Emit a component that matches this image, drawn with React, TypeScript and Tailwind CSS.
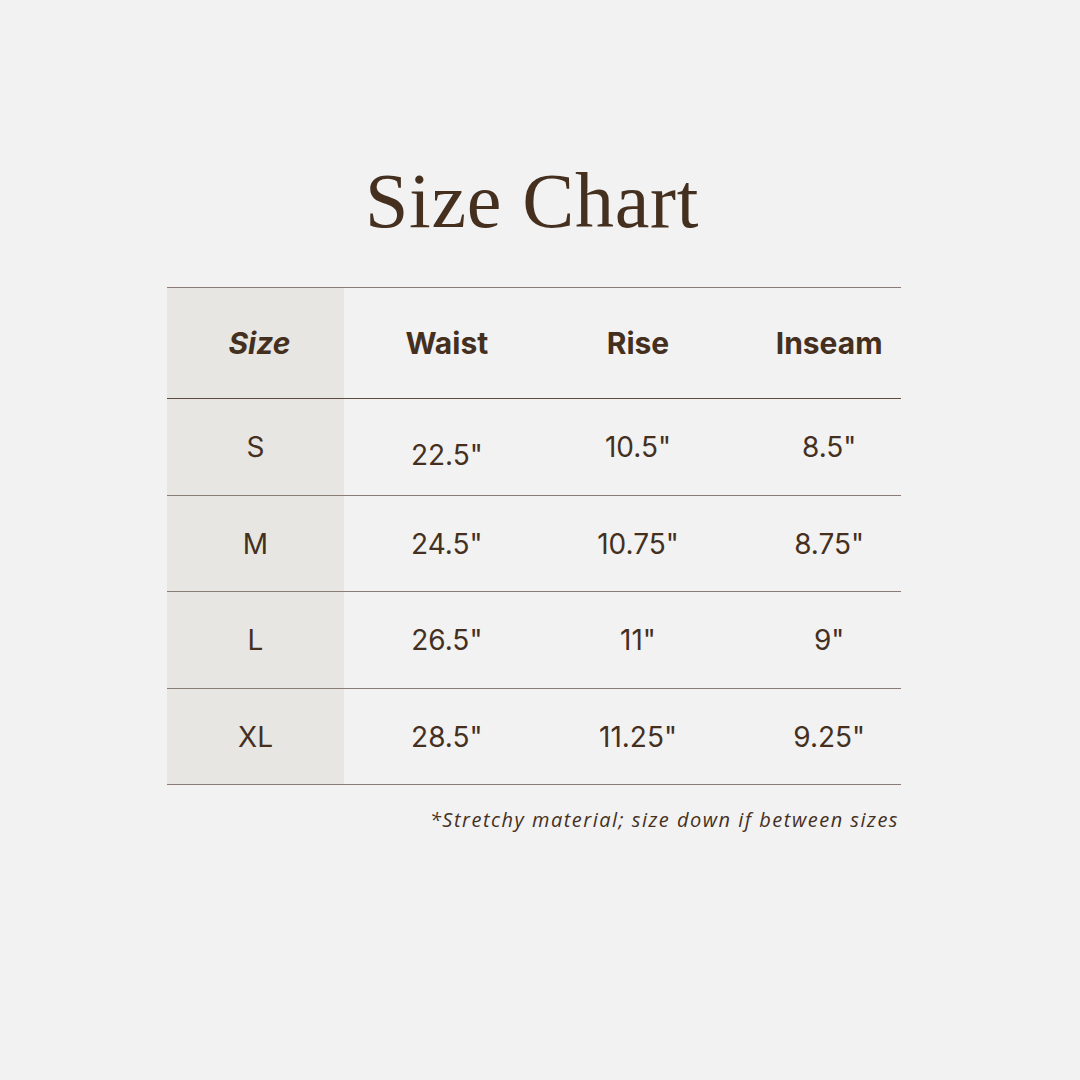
const rows = [
  { size: "S", waist: '22.5"', rise: '10.5"', inseam: '8.5"', waistDrop: true, h: "h-[97px]" },
  { size: "M", waist: '24.5"', rise: '10.75"', inseam: '8.75"', h: "h-[96px]" },
  { size: "L", waist: '26.5"', rise: '11"', inseam: '9"', h: "h-[97px]" },
  { size: "XL", waist: '28.5"', rise: '11.25"', inseam: '9.25"', h: "h-[96px]" },
];

const sans = "font-['Inter',sans-serif]";

export default function App() {
  return (
    <div className="w-[1080px] h-[1080px] bg-[#f2f2f2] text-[#45301f]">
      <h1 className="pt-[162px] pl-[365px] font-['Liberation_Serif',serif] text-[78px] leading-none font-normal tracking-[0.7px]">
        Size Chart
      </h1>

      <div className="mt-[47px] ml-[167px] w-[734px]">
        <div className="border-t border-[#8a7d75]">
          {/* header */}
          <div className={`grid grid-cols-[177px_1fr_1fr_1fr] h-[110px] items-center text-[30px] font-bold ${sans}`}>
            <div className="h-full bg-[#e8e6e2] flex items-center justify-center italic pl-[8px]">Size</div>
            <div className="text-center pl-[20px]">Waist</div>
            <div className="text-center pl-[31px]">Rise</div>
            <div className="text-center pl-[42px]">Inseam</div>
          </div>
          <div className="border-t border-[#5c4a3e]" />

          {rows.map((r) => (
            <div
              key={r.size}
              className={`grid grid-cols-[177px_1fr_1fr_1fr] ${r.h} items-center text-[28px] border-b border-[#8a7d75] ${sans}`}
            >
              <div className="h-full bg-[#e8e6e2] flex items-center justify-center">{r.size}</div>
              <div className={`text-center pl-[20px] ${r.waistDrop ? "pt-[16px]" : ""}`}>{r.waist}</div>
              <div className="text-center pl-[31px]">{r.rise}</div>
              <div className="text-center pl-[42px]">{r.inseam}</div>
            </div>
          ))}
        </div>

        <p className="mt-[20px] text-right pr-[2px] font-['Open_Sans',sans-serif] italic text-[20px] tracking-[0.075em]">
          *Stretchy material; size down if between sizes
        </p>
      </div>
    </div>
  );
}
